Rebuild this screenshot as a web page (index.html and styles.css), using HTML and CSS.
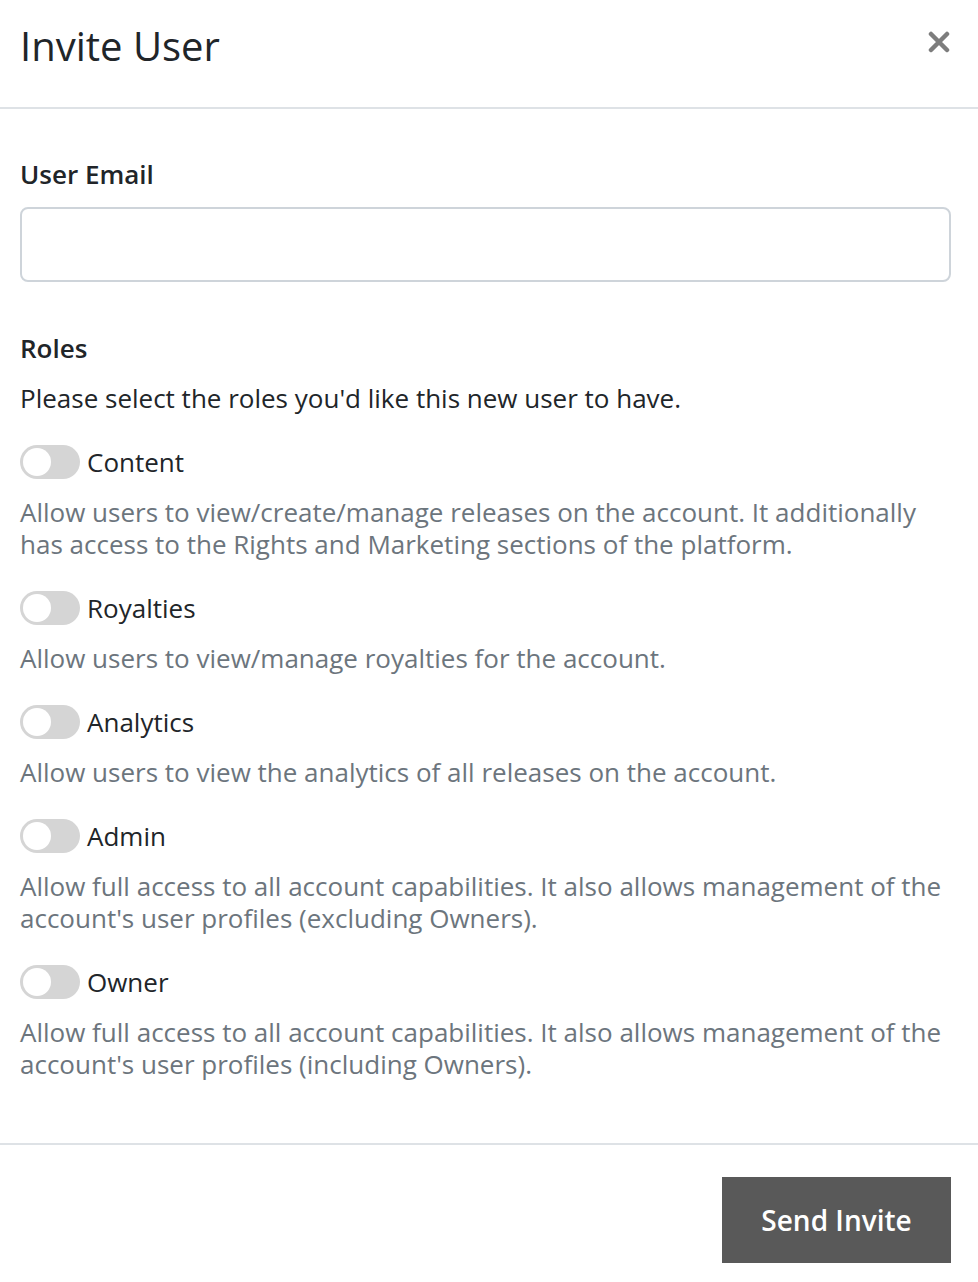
FILE: index.html
```html
<!DOCTYPE html>
<html>
<head>
<meta charset="utf-8">
<link rel="stylesheet" href="styles.css">
</head>
<body>
<div class="modal">
  <div class="modal-header">
    <h1 class="title">Invite User</h1>
    <button class="close" aria-label="Close">
      <svg width="22" height="22" viewBox="0 0 22 22"><path d="M3 3L19 19M19 3L3 19" stroke="#7d7d7d" stroke-width="4.5" stroke-linecap="round"/></svg>
    </button>
  </div>
  <div class="modal-body">
    <label class="field-label">User Email</label>
    <input class="input" type="text">
    <div class="section-label">Roles</div>
    <p class="intro">Please select the roles you'd like this new user to have.</p>
    <div class="role">
      <div class="role-head"><span class="toggle"><span class="knob"></span></span><span class="role-name">Content</span></div>
      <p class="role-desc">Allow users to view/create/manage releases on the account. It additionally has access to the Rights and Marketing sections of the platform.</p>
    </div>
    <div class="role">
      <div class="role-head"><span class="toggle"><span class="knob"></span></span><span class="role-name">Royalties</span></div>
      <p class="role-desc">Allow users to view/manage royalties for the account.</p>
    </div>
    <div class="role">
      <div class="role-head"><span class="toggle"><span class="knob"></span></span><span class="role-name">Analytics</span></div>
      <p class="role-desc">Allow users to view the analytics of all releases on the account.</p>
    </div>
    <div class="role">
      <div class="role-head"><span class="toggle"><span class="knob"></span></span><span class="role-name">Admin</span></div>
      <p class="role-desc">Allow full access to all account capabilities. It also allows management of the account's user profiles (excluding Owners).</p>
    </div>
    <div class="role">
      <div class="role-head"><span class="toggle"><span class="knob"></span></span><span class="role-name">Owner</span></div>
      <p class="role-desc">Allow full access to all account capabilities. It also allows management of the account's user profiles (including Owners).</p>
    </div>
  </div>
  <div class="modal-footer">
    <button class="btn">Send Invite</button>
  </div>
</div>
</body>
</html>
```
FILE: styles.css
```css
html, body {
  margin: 0;
  padding: 0;
  background: #fff;
}
body {
  font-family: "Open Sans", "Liberation Sans", sans-serif;
  color: #212529;
  font-size: 26px;
  line-height: 32px;
}
.modal {
  width: 978px;
}
.modal-header {
  display: flex;
  align-items: flex-start;
  justify-content: space-between;
  height: 107px;
  border-bottom: 2px solid #dee2e6;
  padding: 0 27px 0 20px;
  box-sizing: content-box;
}
.title {
  margin: 0;
  padding-top: 16px;
  font-size: 40px;
  line-height: 60px;
  font-weight: 400;
  color: #212529;
}
.close {
  border: 0;
  background: none;
  padding: 0;
  margin-top: 31px;
  margin-right: 1px;
  width: 22px;
  height: 22px;
  cursor: pointer;
}
.close svg { display: block; }
.modal-body {
  padding: 49px 27px 0 20px;
}
.field-label {
  display: block;
  font-weight: 600;
  margin-bottom: 17px;
}
.input {
  display: block;
  box-sizing: border-box;
  width: 100%;
  height: 75px;
  border: 2px solid #ced4da;
  border-radius: 8px;
  margin: 0 0 50px;
  padding: 0 20px;
  font: inherit;
}
.section-label {
  font-weight: 600;
  margin-bottom: 18px;
}
.intro {
  margin: 0 0 31px;
}
.role {
  margin-bottom: 31px;
}
.role:last-child {
  margin-bottom: 0;
}
.role-head {
  display: flex;
  align-items: center;
  gap: 7px;
  height: 34px;
}
.toggle {
  width: 60px;
  height: 34px;
  border-radius: 17px;
  background: #d5d5d5;
  display: flex;
  align-items: center;
  padding: 0 3px;
  box-sizing: border-box;
}
.knob {
  width: 28px;
  height: 28px;
  border-radius: 50%;
  background: #fff;
}
.role-name {
  color: #212529;
}
.role-desc {
  margin: 17px 0 0;
  color: #6c757d;
}
.modal-footer {
  margin-top: 63px;
  border-top: 2px solid #dee2e6;
  padding: 32px 27px 18px 20px;
  display: flex;
  justify-content: flex-end;
}
.btn {
  border: 0;
  border-radius: 0;
  background: #595959;
  color: #fff;
  font-family: "Open Sans", "Liberation Sans", sans-serif;
  font-size: 28px;
  font-weight: 600;
  height: 86px;
  width: 229px;
  padding: 0;
}
```
